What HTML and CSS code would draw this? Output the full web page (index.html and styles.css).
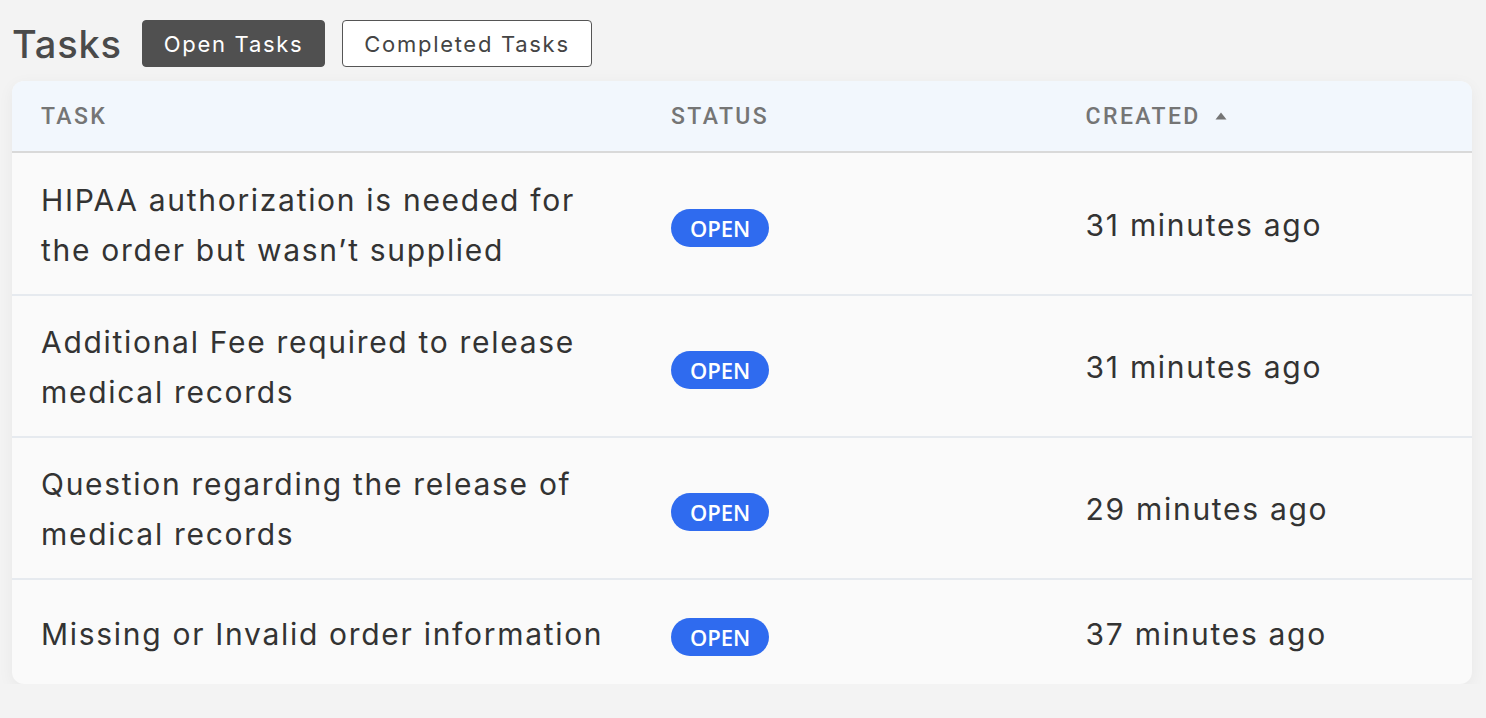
FILE: index.html
```html
<!DOCTYPE html>
<html lang="en">
<head>
    <meta charset="UTF-8">
    <title>Tasks</title>
    <link rel="stylesheet" href="styles.css">
</head>
<body>
<main class="page">
    <div class="top">
        <h1 class="title">Tasks</h1>
        <button class="tab tab-active">Open Tasks</button>
        <button class="tab">Completed Tasks</button>
    </div>
    <div class="card">
        <table class="tasks">
            <thead>
            <tr>
                <th class="col-task">Task</th>
                <th class="col-status">Status</th>
                <th class="col-created">Created
                    <svg class="sort" width="12" height="8" viewBox="0 0 12 8"><path d="M6 0.5 L11.5 7.5 L0.5 7.5 Z" fill="#757575"/></svg>
                </th>
            </tr>
            </thead>
            <tbody>
            <tr class="first">
                <td>HIPAA authorization is needed for the order but wasn’t supplied</td>
                <td><span class="badge">OPEN</span></td>
                <td>31 minutes ago</td>
            </tr>
            <tr>
                <td>Additional Fee required to release medical records</td>
                <td><span class="badge">OPEN</span></td>
                <td>31 minutes ago</td>
            </tr>
            <tr>
                <td>Question regarding the release of medical records</td>
                <td><span class="badge">OPEN</span></td>
                <td>29 minutes ago</td>
            </tr>
            <tr class="last">
                <td>Missing or Invalid order information</td>
                <td><span class="badge">OPEN</span></td>
                <td>37 minutes ago</td>
            </tr>
            </tbody>
        </table>
    </div>
</main>
</body>
</html>
```

FILE: styles.css
```css
body{
    margin: 0;
    background: #f3f3f3;
    font-family: "Inter", "Open Sans", sans-serif;
    color: #333;
}
.page{
    padding: 20px 14px 0 12px;
}
.top{
    display: flex;
    align-items: center;
    gap: 17px;
    height: 47px;
}
.title{
    margin: 0 3px 0 0;
    font-size: 38px;
    font-weight: 500;
    color: #4a4a4a;
    letter-spacing: 0.8px;
}
.tab{
    height: 47px;
    padding: 0 21px;
    font-family: inherit;
    font-size: 22px;
    letter-spacing: 1.7px;
    color: #444;
    background: #fff;
    border: 1.5px solid #555;
    border-radius: 4px;
}
.tab-active{
    background: #505050;
    border-color: #505050;
    color: #fff;
}
.card{
    margin-top: 14px;
    background: #fafafa;
    border-radius: 12px;
    overflow: hidden;
    box-shadow: 0 4px 16px rgba(0,0,0,0.05);
}
.tasks{
    width: 100%;
    border-collapse: collapse;
}
.tasks th{
    height: 70px;
    padding: 0 29px;
    text-align: left;
    background: #f2f7fd;
    border-bottom: 2px solid #d9d9d9;
    font-family: "Roboto", sans-serif;
    font-size: 23px;
    font-weight: 500;
    letter-spacing: 2.4px;
    text-transform: uppercase;
    color: #757575;
}
.col-task{
    width: 43.15%;
}
.col-status{
    width: 28.4%;
}
.sort{
    margin-left: 6px;
    vertical-align: 4px;
}
.tasks td{
    padding: 21px 29px 19px;
    font-size: 30px;
    line-height: 50px;
    letter-spacing: 1.7px;
    border-bottom: 2px solid #e6eaef;
}
.tasks tr.first td{
    padding-top: 22px;
}
.tasks tr.last td{
    padding: 29px 29px 25px;
    border-bottom: none;
}
.badge{
    display: inline-block;
    padding: 0 19px;
    height: 38px;
    line-height: 38px;
    border-radius: 19px;
    background: #2f6bef;
    color: #fff;
    font-family: "Open Sans", sans-serif;
    font-size: 22px;
    font-weight: 600;
    letter-spacing: 0;
    vertical-align: middle;
}
```
